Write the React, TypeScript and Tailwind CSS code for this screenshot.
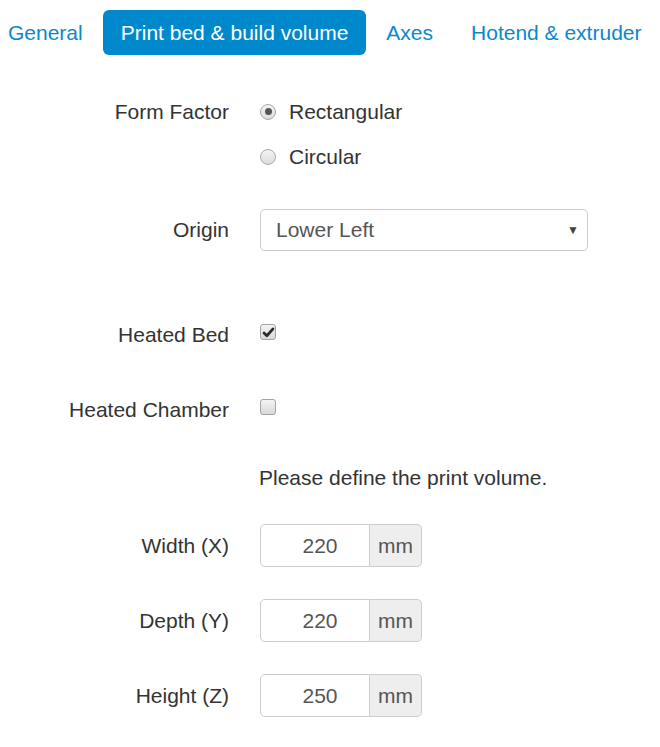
import React from 'react'

const font = { fontFamily: '"Liberation Sans", Arial, Helvetica, sans-serif' }

const tabs = ['General', 'Print bed & build volume', 'Axes', 'Hotend & extruder']

function Radio({ checked, label }: { checked?: boolean; label: string }) {
  return (
    <label className="flex h-[45px] items-center">
      <span className="flex h-[16px] w-[16px] items-center justify-center rounded-full border border-[#a9a9a9] bg-gradient-to-b from-[#f4f4f4] to-[#dcdcdc]">
        {checked && <span className="h-[7px] w-[7px] rounded-full bg-[#555]" />}
      </span>
      <span className="ml-[13px] text-[21px] text-[#333]">{label}</span>
    </label>
  )
}

function Checkbox({ checked }: { checked?: boolean }) {
  return (
    <span className="-mt-[6px] flex h-[16px] w-[16px] items-center justify-center rounded-[3px] border border-[#a3a3a3] bg-gradient-to-b from-[#f3f3f3] to-[#d9d9d9]">
      {checked && (
        <svg viewBox="0 0 16 16" className="h-[13px] w-[13px]">
          <path d="M2.5 8.5 L6 12 L13.5 3.5" fill="none" stroke="#2b2b2b" strokeWidth="3.4" strokeLinejoin="round" strokeLinecap="round" />
        </svg>
      )}
    </span>
  )
}

function Row({ label, className, children }: { label?: string; className?: string; children: React.ReactNode }) {
  return (
    <div className={`flex ${className ?? ''}`}>
      <div className="flex w-[229px] shrink-0 items-center justify-end text-[21px] text-[#333]">{label}</div>
      <div className="ml-[31px] flex items-center">{children}</div>
    </div>
  )
}

function MmInput({ value }: { value: string }) {
  return (
    <div className="flex h-[43px]">
      <div className="flex w-[110px] items-center justify-center rounded-l-[5px] border border-[#ccc] bg-white pl-[10px] text-[21px] text-[#555]">
        {value}
      </div>
      <div className="flex w-[52px] items-center justify-center rounded-r-[5px] border border-l-0 border-[#ccc] bg-[#eee] text-[21px] text-[#555]">
        mm
      </div>
    </div>
  )
}

export default function App() {
  return (
    <div className="h-[747px] w-[660px] overflow-hidden bg-white" style={font}>
      {/* nav pills */}
      <div className="ml-[-10px] mt-[10px] flex h-[45px] whitespace-nowrap">
        {tabs.map((t, i) => (
          <div
            key={t}
            className={`flex items-center rounded-[6px] px-[18px] text-[21px] ${i > 0 ? 'ml-[2px]' : ''} ${
              i === 1 ? 'bg-[#0088cc] text-white' : 'text-[#0a88cc]'
            }`}
          >
            {t}
          </div>
        ))}
      </div>

      <div className="mt-[34px] flex">
        <div className="flex h-[45px] w-[229px] items-center justify-end text-[21px] text-[#333]">Form Factor</div>
        <div className="ml-[31px] flex flex-col">
          <Radio checked label="Rectangular" />
          <Radio label="Circular" />
        </div>
      </div>

      <Row label="Origin" className="mt-[30px] h-[42px]">
        <div className="flex h-[42px] w-[328px] items-center justify-between rounded-[5px] border border-[#ccc] bg-white pl-[15px] pr-[8px] text-[21px] text-[#555]">
          <span>Lower Left</span>
          <span className="text-[12px] text-[#444]">▼</span>
        </div>
      </Row>

      <Row label="Heated Bed" className="mt-[64px] h-[40px]">
        <Checkbox checked />
      </Row>

      <Row label="Heated Chamber" className="mt-[35px] h-[40px]">
        <Checkbox />
      </Row>

      <Row className="mt-[28px] h-[40px]">
        <span className="-ml-[1px] text-[21px] text-[#333]">Please define the print volume.</span>
      </Row>

      <Row label="Width (X)" className="mt-[26px] h-[43px]">
        <MmInput value="220" />
      </Row>
      <Row label="Depth (Y)" className="mt-[32px] h-[43px]">
        <MmInput value="220" />
      </Row>
      <Row label="Height (Z)" className="mt-[32px] h-[43px]">
        <MmInput value="250" />
      </Row>
    </div>
  )
}
